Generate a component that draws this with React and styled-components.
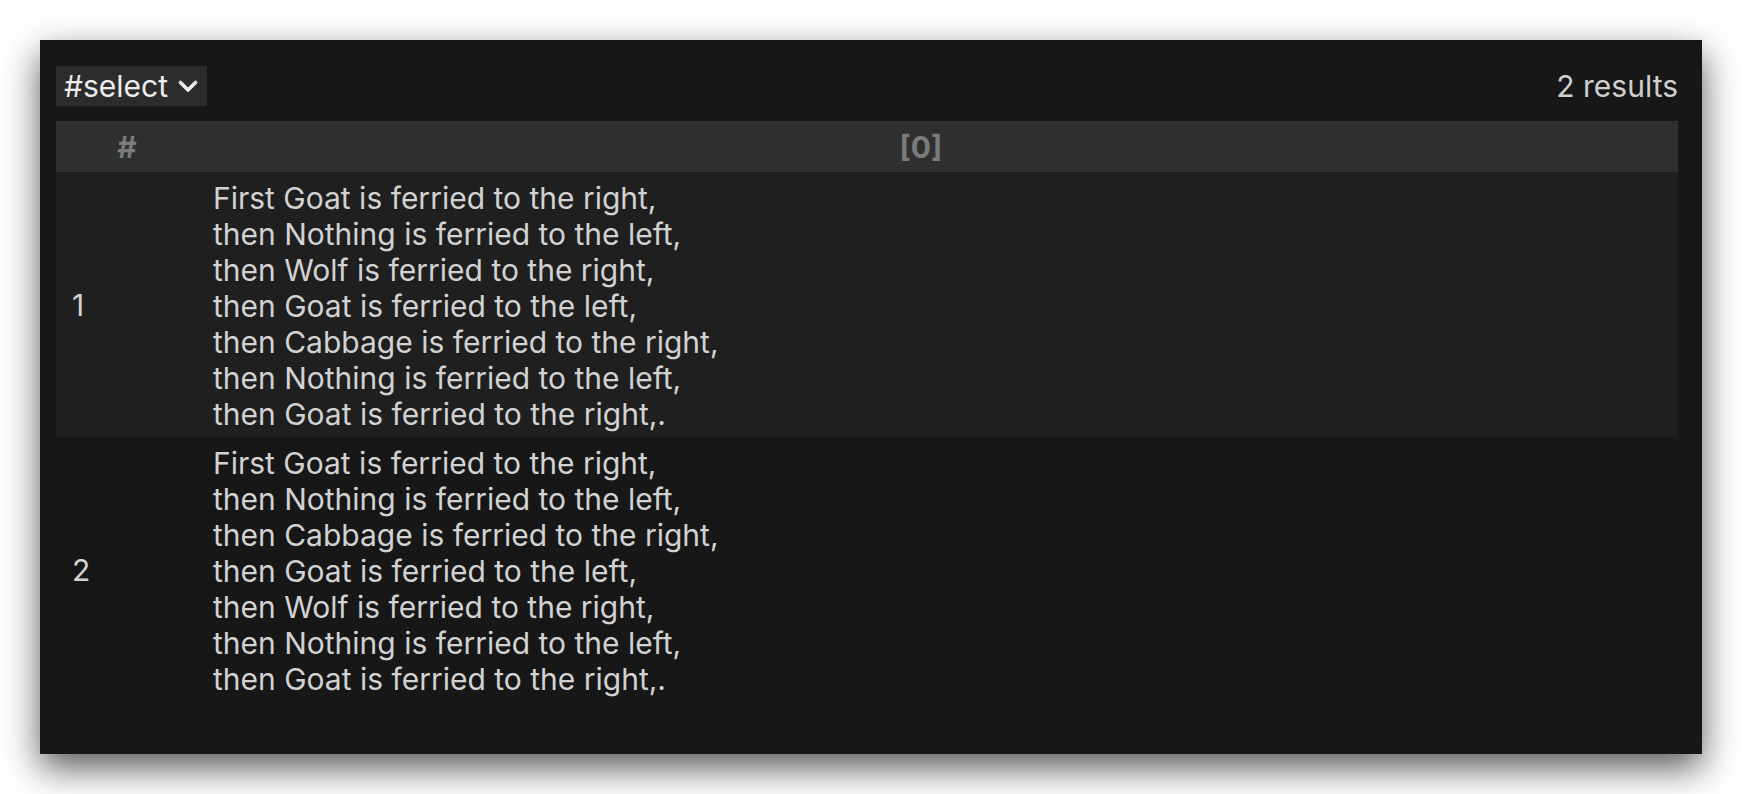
import React from "react";
import styled, { createGlobalStyle } from "styled-components";

const Global = createGlobalStyle`
  html, body { margin: 0; padding: 0; background: #ffffff; }
  body { font-family: Inter, "Noto Sans", sans-serif; }
  #root { padding: 40px; }
`;

const Panel = styled.div`
  width: 1662px;
  height: 714px;
  box-sizing: border-box;
  background: #171717;
  box-shadow: 0 14px 34px rgba(0, 0, 0, 0.65);
  padding: 26px 24px 0 16px;
  display: flex;
  flex-direction: column;
  gap: 15px;
  color: #d2d2d2;
  font-size: 30px;
`;

const Toolbar = styled.div`
  display: flex;
  align-items: center;
  justify-content: space-between;
  height: 40px;
`;

const SelectButton = styled.button`
  all: unset;
  height: 40px;
  box-sizing: border-box;
  padding: 0 9px 0 8px;
  background: #2c2c2c;
  color: #ededed;
  display: flex;
  align-items: center;
  gap: 10px;
  font-family: Inter, "Noto Sans", sans-serif;
  font-size: 30px;
  line-height: 40px;
`;

const Count = styled.div`
  color: #cfcfcf;
  line-height: 40px;
`;

const Table = styled.div`
  display: grid;
  grid-template-columns: 142px 1fr;
`;

const HeadRow = styled.div`
  display: contents;
`;

const HeadCell = styled.div`
  background: #2e302f;
  height: 51px;
  display: flex;
  align-items: center;
  justify-content: center;
  font-weight: 700;
  color: #7b7b7b;
  padding-right: ${(p) => p.$shift || 0}px;
`;

const Row = styled.div`
  display: contents;
`;

const Cell = styled.div`
  background: ${(p) => (p.$alt ? "#1f1f1f" : "transparent")};
  padding: ${(p) => (p.$num ? "0 0 0 16px" : "8px 0 5px 15px")};
  display: flex;
  align-items: center;
  line-height: 36px;
  color: #d2d2d2;
`;

const Lines = styled.div`
  display: flex;
  flex-direction: column;
`;

const Chevron = () => (
  <svg width="20" height="13" viewBox="0 0 20 13" fill="none">
    <polyline
      points="2.5,2.5 10,10 17.5,2.5"
      stroke="#ededed"
      strokeWidth="3.6"
      strokeLinecap="round"
      strokeLinejoin="round"
    />
  </svg>
);

const results = [
  [
    "First Goat is ferried to the right,",
    "then Nothing is ferried to the left,",
    "then Wolf is ferried to the right,",
    "then Goat is ferried to the left,",
    "then Cabbage is ferried to the right,",
    "then Nothing is ferried to the left,",
    "then Goat is ferried to the right,.",
  ],
  [
    "First Goat is ferried to the right,",
    "then Nothing is ferried to the left,",
    "then Cabbage is ferried to the right,",
    "then Goat is ferried to the left,",
    "then Wolf is ferried to the right,",
    "then Nothing is ferried to the left,",
    "then Goat is ferried to the right,.",
  ],
];

export default function App() {
  return (
    <>
      <Global />
      <Panel>
        <Toolbar>
          <SelectButton>
            #select
            <Chevron />
          </SelectButton>
          <Count>2 results</Count>
        </Toolbar>
        <Table>
          <HeadRow>
            <HeadCell>#</HeadCell>
            <HeadCell $shift={34}>[0]</HeadCell>
          </HeadRow>
          {results.map((lines, i) => (
            <Row key={i}>
              <Cell $num $alt={i % 2 === 0}>{i + 1}</Cell>
              <Cell $alt={i % 2 === 0}>
                <Lines>
                  {lines.map((l, j) => (
                    <span key={j}>{l}</span>
                  ))}
                </Lines>
              </Cell>
            </Row>
          ))}
        </Table>
      </Panel>
    </>
  );
}
